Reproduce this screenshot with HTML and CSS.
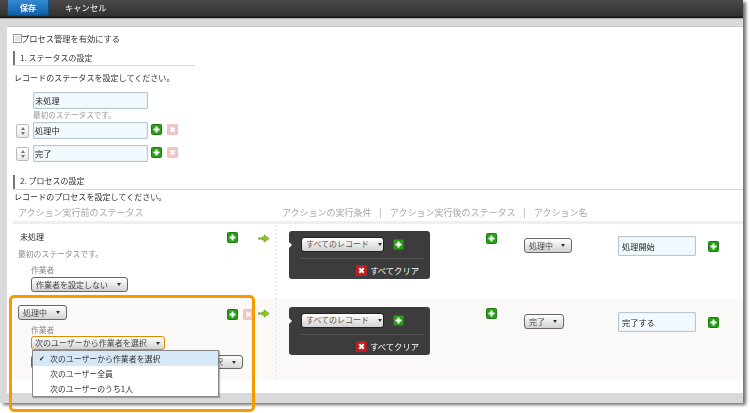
FILE: index.html
```html
<!DOCTYPE html>
<html lang="ja">
<head>
<meta charset="utf-8">
<title>プロセス管理</title>
<link rel="stylesheet" href="styles.css">
</head>
<body>
<svg class="defs" width="0" height="0" aria-hidden="true">
  <symbol id="plus" viewBox="0 0 11 11"><rect x=".5" y=".5" width="10" height="10" rx="1" fill="#2a9e18" stroke="#1f7a12"/><path d="M5.5 2.5v6M2.5 5.5h6" stroke="#fff" stroke-width="2"/></symbol>
  <symbol id="del" viewBox="0 0 11 11"><rect width="11" height="11" rx="1" fill="#efc4c4"/><path d="M3.5 3.5l4 4M7.5 3.5l-4 4" stroke="#fff" stroke-width="1.8"/></symbol>
  <symbol id="clear" viewBox="0 0 11 11"><rect width="11" height="11" rx="1" fill="#b82024"/><path d="M3.3 3.3l4.4 4.4M7.7 3.3l-4.4 4.4" stroke="#fff" stroke-width="2"/></symbol>
  <symbol id="arrow" viewBox="0 0 12 9"><circle cx="1.4" cy="4.500" r="1.300" fill="#6f9f1a"/><path d="M3.500 3h2.500V.8L11.300 4.500 6 8.200V6H3.500z" fill="#93c422" stroke="#5c8a12" stroke-width=".5"/></symbol>
</svg>
<div class="window">
  <header class="topbar">
    <button class="save">保存</button>
    <span class="cancel">キャンセル</span>
  </header>
  <main class="panel">
    <label class="enable"><span class="check"></span>プロセス管理を有効にする</label>

    <h2 class="sec sec-one">1. ステータスの設定</h2>
    <p class="lead">レコードのステータスを設定してください。</p>
    <div class="status-list">
      <div class="status-row"><span class="sort-slot"></span><input class="field status-input" value="未処理"></div>
      <p class="hint">最初のステータスです。</p>
      <div class="status-row">
        <span class="sort"><i class="up"></i><i class="down"></i></span>
        <input class="field status-input" value="処理中">
        <svg class="ico"><use href="#plus"/></svg>
        <svg class="ico ico-del"><use href="#del"/></svg>
      </div>
      <div class="status-row status-gap">
        <span class="sort"><i class="up"></i><i class="down"></i></span>
        <input class="field status-input" value="完了">
        <svg class="ico"><use href="#plus"/></svg>
        <svg class="ico ico-del"><use href="#del"/></svg>
      </div>
    </div>

    <h2 class="sec sec-two">2. プロセスの設定</h2>
    <p class="lead lead-two">レコードのプロセスを設定してください。</p>

    <div class="thead">
      <span class="th-from">アクション実行前のステータス</span>
      <span>アクションの実行条件<b>|</b>アクション実行後のステータス<b>|</b>アクション名</span>
    </div>

    <section class="prow prow-one">
      <div class="from">
        <div class="from-body">
          <div class="from-name">未処理</div>
          <div class="from-hint">最初のステータスです。</div>
          <div class="assignee">作業者</div>
          <button class="sel sel-indent">作業者を設定しない<i></i></button>
        </div>
        <div class="from-icons">
          <svg class="ico"><use href="#plus"/></svg>
          <svg class="ico-arrow"><use href="#arrow"/></svg>
        </div>
      </div>
      <div class="cond-cell">
        <div class="cond">
          <div class="cond-top"><button class="sel sel-cond">すべてのレコード<i></i></button><svg class="ico"><use href="#plus"/></svg></div>
          <div class="cond-clear"><svg class="ico"><use href="#clear"/></svg>すべてクリア</div>
        </div>
        <svg class="ico ico-after"><use href="#plus"/></svg>
      </div>
      <div class="to-cell"><button class="sel">処理中<i></i></button></div>
      <div class="name-cell"><input class="field name-input" value="処理開始"><svg class="ico"><use href="#plus"/></svg></div>
    </section>

    <section class="prow prow-two">
      <div class="from">
        <div class="from-body">
          <button class="sel">処理中<i></i></button>
          <div class="assignee assignee-two">作業者</div>
          <button class="sel sel-indent sel-open">次のユーザーから作業者を選択<i></i></button>
          <button class="sel sel-behind">択<i></i></button>
        </div>
        <div class="from-icons from-icons-two">
          <svg class="ico"><use href="#plus"/></svg>
          <svg class="ico ico-del"><use href="#del"/></svg>
          <svg class="ico-arrow"><use href="#arrow"/></svg>
        </div>
      </div>
      <div class="cond-cell">
        <div class="cond">
          <div class="cond-top"><button class="sel sel-cond">すべてのレコード<i></i></button><svg class="ico"><use href="#plus"/></svg></div>
          <div class="cond-clear"><svg class="ico"><use href="#clear"/></svg>すべてクリア</div>
        </div>
        <svg class="ico ico-after"><use href="#plus"/></svg>
      </div>
      <div class="to-cell"><button class="sel">完了<i></i></button></div>
      <div class="name-cell"><input class="field name-input" value="完了する"><svg class="ico"><use href="#plus"/></svg></div>
    </section>
  </main>
</div>

<ul class="menu">
  <li class="on">次のユーザーから作業者を選択</li>
  <li>次のユーザー全員</li>
  <li>次のユーザーのうち1人</li>
</ul>
<div class="callout"></div>
</body>
</html>
```

FILE: styles.css
```css
* { box-sizing: border-box; }
html, body { margin: 0; padding: 0; }
body {
  width: 750px;
  height: 413px;
  overflow: hidden;
  background: #fff;
  position: relative;
  font-family: "Noto Sans CJK JP", "Noto Sans", sans-serif;
  font-size: 8px;
  line-height: 12px;
  color: #333;
}
.defs { position: absolute; }
p, h2, ul { margin: 0; padding: 0; }
button { font-family: inherit; }

.window {
  width: 743px;
  height: 403px;
  background: #d9d9d9;
  box-shadow: 3px 2px 3px rgba(0,0,0,.55);
  padding-bottom: 10px;
  filter: blur(.25px);
}
.topbar {
  height: 19px;
  display: flex;
  align-items: flex-start;
  background: linear-gradient(#4a4a4a, #333 85%, #111);
  border-bottom: 1px solid #aaa;
}
.save {
  width: 42px;
  height: 16px;
  margin-left: 7px;
  border: 1px solid #0d4f8c;
  border-top: 0;
  border-radius: 0 0 3px 3px;
  padding: 1px 0 0;
  background: linear-gradient(#3389d2, #125fa9);
  color: #fff;
  font-size: 8px;
  font-weight: 700;
  line-height: 12px;
}
.cancel {
  margin: 1px 0 0 16px;
  color: #fff;
  font-size: 8.300px;
}
.panel {
  height: 367px;
  margin: 7px 0 0 7px;
  background: #fff;
  border-top: 1px solid #c8c8c8;
  padding-top: 4px;
}
.enable {
  display: flex;
  align-items: center;
  margin-left: 6px;
  height: 14px;
  font-size: 8.250px;
}
.check {
  width: 9px;
  height: 9px;
  margin-right: -1px;
  border: 1px solid #999;
  background: #e4e4e4;
  box-shadow: inset 0 0 0 1px #fff;
}
.sec {
  height: 14px;
  border-left: 2px solid #777;
  margin-left: 6px;
  padding-left: 5px;
  font-weight: 400;
  font-size: 8px;
  line-height: 13px;
}
.sec-one { margin-top: 6px; width: 182px; box-shadow: 0 1px 0 #ddd9cf; }
.sec-two { margin-top: 13px; line-height: 11px; box-shadow: 0 1px 0 #d8d5cb; }
.lead { margin: 7px 0 0 7px; font-size: 8.050px; }
.lead-two { margin-top: 2px; }

.status-list { margin: 8px 0 0 9px; }
.status-row { display: flex; align-items: center; height: 17px; }
.status-gap { margin-top: 6px; }
.sort-slot { width: 17px; }
.sort {
  display: flex;
  flex-direction: column;
  align-items: center;
  justify-content: center;
  gap: 2px;
  width: 13px;
  height: 14px;
  margin-right: 4px;
  border: 1px solid #bbb;
  border-radius: 2px;
  background: linear-gradient(#fff, #e8e8e8);
}
.sort i { width: 0; height: 0; border-left: 2px solid transparent; border-right: 2px solid transparent; }
.sort .up { border-bottom: 3px solid #777; }
.sort .down { border-top: 3px solid #777; }
.field {
  height: 17px;
  border: 1px solid #b7c8d5;
  border-radius: 1px;
  background: #f2f9ff;
  box-shadow: inset 0 0 1px #9bb;
  padding: 0 1px;
  font-family: inherit;
  font-size: 8.200px;
  color: #222;
}
.status-input { width: 115px; margin-right: 3px; padding-bottom: 2px; }
.ico { display: block; width: 11px; height: 11px; flex: none; }
.ico-del { margin-left: 5px; }
.status-row .ico { margin-top: -3px; }
.hint { margin: 0 0 1px 17px; height: 12px; color: #9a9a9a; font-size: 7.600px; }

.thead {
  display: flex;
  height: 17px;
  margin: 4px 0 0 6px;
  padding-left: 5px;
  border-bottom: 3px solid #efefef;
  color: #a8a8a8;
  font-size: 9px;
  line-height: 12px;
}
.th-from { width: 264px; }
.thead b { font-weight: 400; margin: 0 8px; color: #8fa3b5; }

.prow {
  display: grid;
  grid-template-columns: 264px 247px 94px 1fr;
  margin-left: 6px;
}
.prow-one { height: 74px; margin-top: 1px; }
.prow-two { height: 81px; background: #faf9f7; }
.from {
  display: flex;
  border-right: 2px dotted #eee;
}
.from-body { width: 214px; padding-left: 5px; padding-top: 6px; }
.from-name { font-size: 8px; height: 12px; padding-left: 2px; color: #222; }
.from-hint { margin-top: 5px; color: #8c8c8c; font-size: 7.800px; height: 12px; }
.assignee { margin: 5px 0 0 13px; color: #8c8c8c; font-size: 7.800px; height: 10px; line-height: 10px; }
.from-icons { display: flex; padding-top: 7px; }
.from-icons-two { padding-top: 10px; }
.ico-arrow { display: block; width: 12px; height: 9px; margin: 2px 0 0 20px; }
.from-icons-two .ico-arrow { margin: 0 0 0 4px; }

.sel {
  display: inline-flex;
  align-items: center;
  height: 15px;
  padding: 0 6px 0 4px;
  border: 1px solid #666;
  border-radius: 3px;
  background: linear-gradient(#fff, #d2d2d2);
  color: #444;
  font-size: 8px;
  line-height: 12px;
  white-space: nowrap;
}
.sel i {
  width: 0;
  height: 0;
  margin-left: 9px;
  border-left: 2.500px solid transparent;
  border-right: 2.500px solid transparent;
  border-top: 3px solid #333;
}
.sel-indent { margin: 2px 0 0 13px; }
.sel-open { height: 14px; margin-top: 1px; border-color: #e08a00; display: flex; width: 134px; padding-left: 3px; }
.sel-behind { display: flex; height: 14px; width: 212px; margin: 5px 0 0 13px; justify-content: flex-end; }

.cond-cell { display: flex; align-items: flex-start; padding: 6px 0 0 12px; }
.prow-two .cond-cell { padding-top: 8px; }
.cond {
  width: 141px;
  height: 48px;
  background: #3c3c3c;
  border-radius: 3px;
  padding: 6px 6px 0 12px;
  position: relative;
}
.cond::before {
  content: "";
  position: absolute;
  left: 0;
  top: 11px;
  width: 0;
  height: 0;
  border-left: 3px solid #fff;
  border-top: 3px solid transparent;
  border-bottom: 3px solid transparent;
}
.cond-top {
  display: flex;
  align-items: center;
  gap: 9px;
  height: 22px;
  padding-bottom: 7px;
  border-bottom: 1px solid #555;
}
.sel-cond { width: 83px; border-color: #222; color: #555; padding-left: 4px; justify-content: space-between; }
.cond-clear {
  display: flex;
  align-items: center;
  justify-content: flex-end;
  gap: 3px;
  margin: 5px 0 0;
  padding-right: 5px;
  color: #fff;
  font-size: 8.300px;
}
.ico-after { margin: 2px 0 0 56px; }
.prow-two .ico-after { margin-top: 1px; }
.to-cell { padding-top: 13px; }
.prow-two .to-cell { padding-top: 15px; }
.to-cell .sel i { margin-left: 8px; }
.name-cell { display: flex; gap: 12px; padding-top: 11px; }
.prow-two .name-cell { padding-top: 13px; }
.name-cell .ico { margin-top: 5px; }
.name-input { width: 78px; height: 20px; padding: 0 3px; }

.menu {
  position: absolute;
  left: 32px;
  top: 350px;
  width: 187px;
  list-style: none;
  background: #fff;
  border: 1px solid #888;
  box-shadow: 1px 1px 1px rgba(0,0,0,.25);
  z-index: 3;
}
.menu li { height: 15px; padding-left: 17px; line-height: 15px; font-size: 7.900px; color: #333; position: relative; }
.menu li.on { background: #d6e8f6; }
.menu li.on::before { content: "✔"; position: absolute; left: 6px; font-size: 7px; }
.callout {
  position: absolute;
  left: 9px;
  top: 295px;
  width: 246px;
  height: 117px;
  border: 3px solid #f59b00;
  border-radius: 5px;
  z-index: 4;
}
```
